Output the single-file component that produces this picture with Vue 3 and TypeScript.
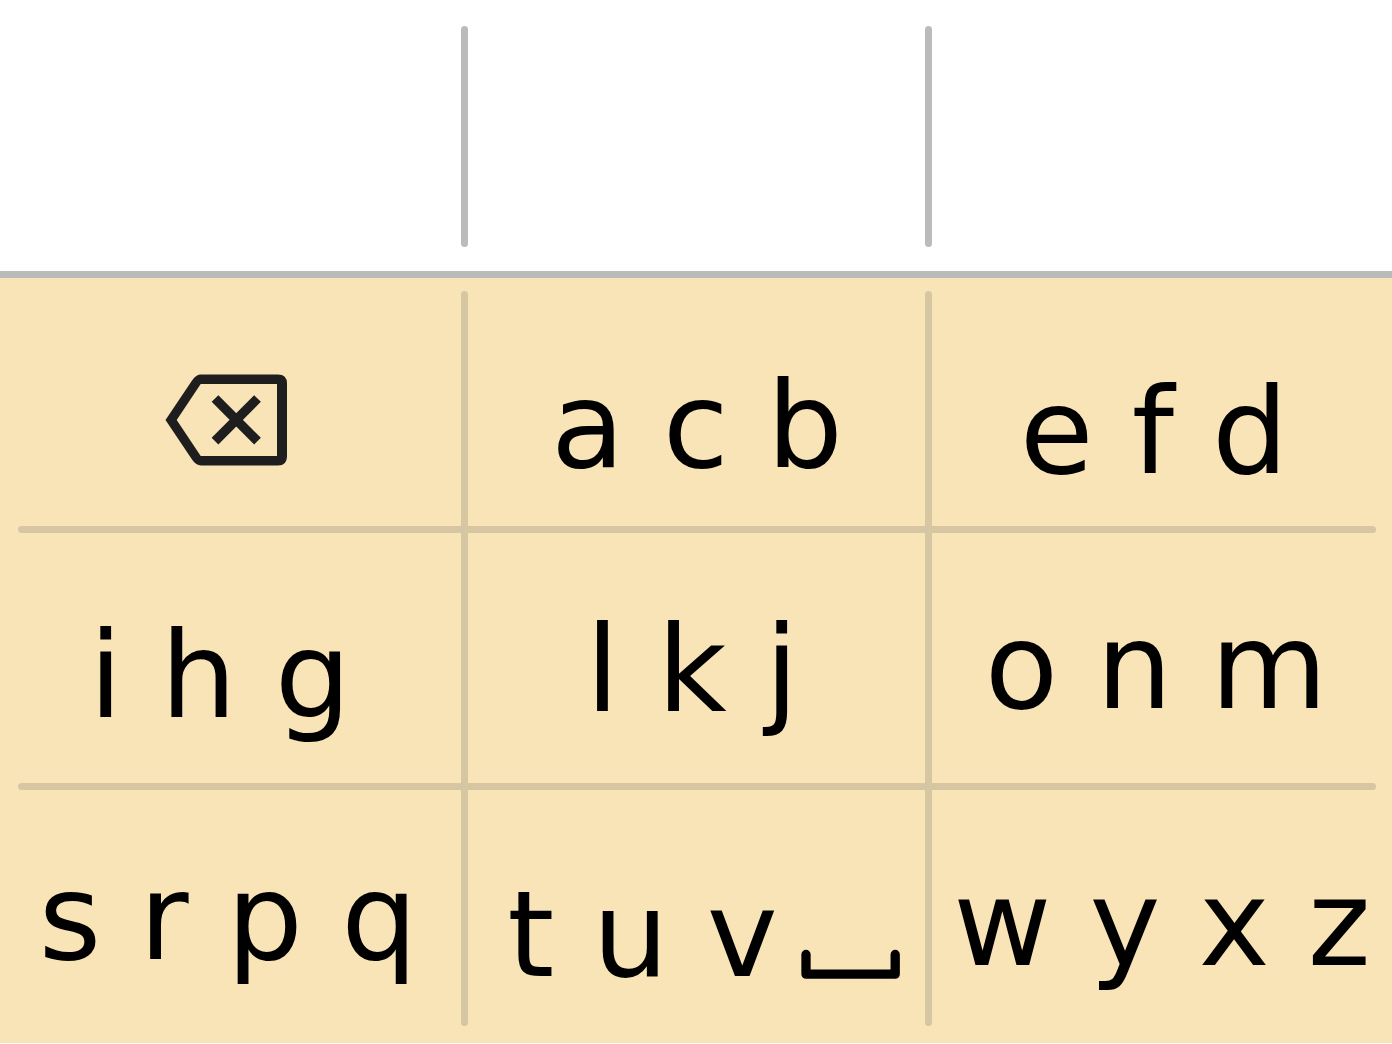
<script setup lang="ts">
interface Key {
  id: string
  letters?: string
  icon?: 'backspace' | 'space'
}

const rows: Key[][] = [
  [{ id: 'backspace', icon: 'backspace' }, { id: 'acb', letters: 'a c b' }, { id: 'efd', letters: 'e f d' }],
  [{ id: 'ihg', letters: 'i h g' }, { id: 'lkj', letters: 'l k j' }, { id: 'onm', letters: 'o n m' }],
  [{ id: 'srpq', letters: 's r p q' }, { id: 'tuv', letters: 't u v', icon: 'space' }, { id: 'wyxz', letters: 'w y x z' }],
]
</script>

<template>
  <main class="keyboard">
    <section class="suggestions" aria-label="Suggestions">
      <div class="suggestion"></div>
      <span class="bar"></span>
      <div class="suggestion"></div>
      <span class="bar"></span>
      <div class="suggestion"></div>
    </section>

    <section class="keypad" aria-label="Keys">
      <span class="rule upright first"></span>
      <span class="rule upright second"></span>
      <span class="rule level upper"></span>
      <span class="rule level lower"></span>
      <div v-for="(row, r) in rows" :key="r" class="row">
        <button
          v-for="key in row"
          :key="key.id"
          type="button"
          class="key"
          :class="key.id"
          :aria-label="key.letters ? undefined : key.id"
        >
          <svg v-if="key.icon === 'backspace'" class="backspace-icon" viewBox="0 0 122 92" aria-hidden="true">
            <path
              fill-rule="evenodd"
              d="M.5 46 27.2 6.2Q31 .5 36 .5H113Q122 .5 122 9.500V82.500Q122 91.500 113 91.500H36Q31 91.500 27.200 85.800ZM11.700 46 35.700 82H112V10H35.700Z"
            />
            <path d="M50 24.500 92.500 67.200M92.500 24.500 50 67.200" fill="none" stroke="#1e1e1e" stroke-width="9.500" />
          </svg>
          <span v-if="key.letters">{{ key.letters }}</span>
          <svg v-if="key.icon === 'space'" class="space-icon" viewBox="0 0 100 30" aria-hidden="true">
            <path
              d="M5 5.500V25.200H94.200V5.500"
              fill="none"
              stroke="#000"
              stroke-width="9.300"
              stroke-linecap="round"
              stroke-linejoin="round"
            />
          </svg>
        </button>
      </div>
    </section>
  </main>
</template>

<style>
body {
  margin: 0;
  background: #fff;
}
</style>

<style scoped>
.keyboard {
  width: 100%;
  font-family: "DejaVu Sans", sans-serif;
  color: #000;
}

.suggestions {
  display: flex;
  box-sizing: border-box;
  height: 278px;
  padding: 26px 0 24px;
  border-bottom: 7px solid #bbb;
}

.suggestion {
  flex: 1;
}

.bar {
  width: 7px;
  margin: 0 -4px 0 -3px;
  border-radius: 4px;
  background: #bbb;
}

.keypad {
  display: grid;
  grid-template-columns: repeat(3, minmax(0, 1fr));
  grid-template-rows: 252px 257px 256px;
  background: #f9e4b7;
}

.rule {
  border-radius: 4px;
  background: #d6c6a2;
}

.upright {
  grid-row: 1 / -1;
  justify-self: end;
  width: 7px;
  margin: 13px -4px 17px 0;
}

.first {
  grid-column: 1;
}

.second {
  grid-column: 2;
}

.level {
  grid-column: 1 / -1;
  align-self: end;
  height: 7px;
  margin: 0 16px -3px 18px;
}

.upper {
  grid-row: 1;
}

.lower {
  grid-row: 2;
}

.row {
  display: grid;
  grid-column: 1 / -1;
  grid-template-columns: repeat(3, minmax(0, 1fr));
}

.row:nth-of-type(1) {
  grid-row: 1;
}

.row:nth-of-type(2) {
  grid-row: 2;
}

.row:nth-of-type(3) {
  grid-row: 3;
}

.key {
  display: flex;
  align-items: flex-start;
  justify-content: center;
  box-sizing: border-box;
  min-width: 0;
  margin: 0;
  padding: 77px 8px 0 0;
  border: 0;
  background: none;
  font: inherit;
  font-size: 120px;
  line-height: 120px;
  color: inherit;
  white-space: nowrap;
  cursor: pointer;
}

.backspace {
  padding: 96px 12px 0 0;
}

.acb {
  padding: 88px 0 0 2px;
}

.efd {
  padding: 94px 12px 0 0;
}

.ihg {
  padding: 86px 24px 0 0;
}

.lkj {
  padding-top: 80px;
}

.srpq {
  padding-top: 71px;
}

.tuv {
  gap: 23px;
  padding: 88px 0 0 16px;
}

.wyxz {
  padding: 77px 0 0 4px;
}

.backspace-icon {
  width: 122px;
  height: 92px;
  fill: #1e1e1e;
}

.space-icon {
  width: 100px;
  height: 30px;
  margin-top: 74px;
}
</style>
